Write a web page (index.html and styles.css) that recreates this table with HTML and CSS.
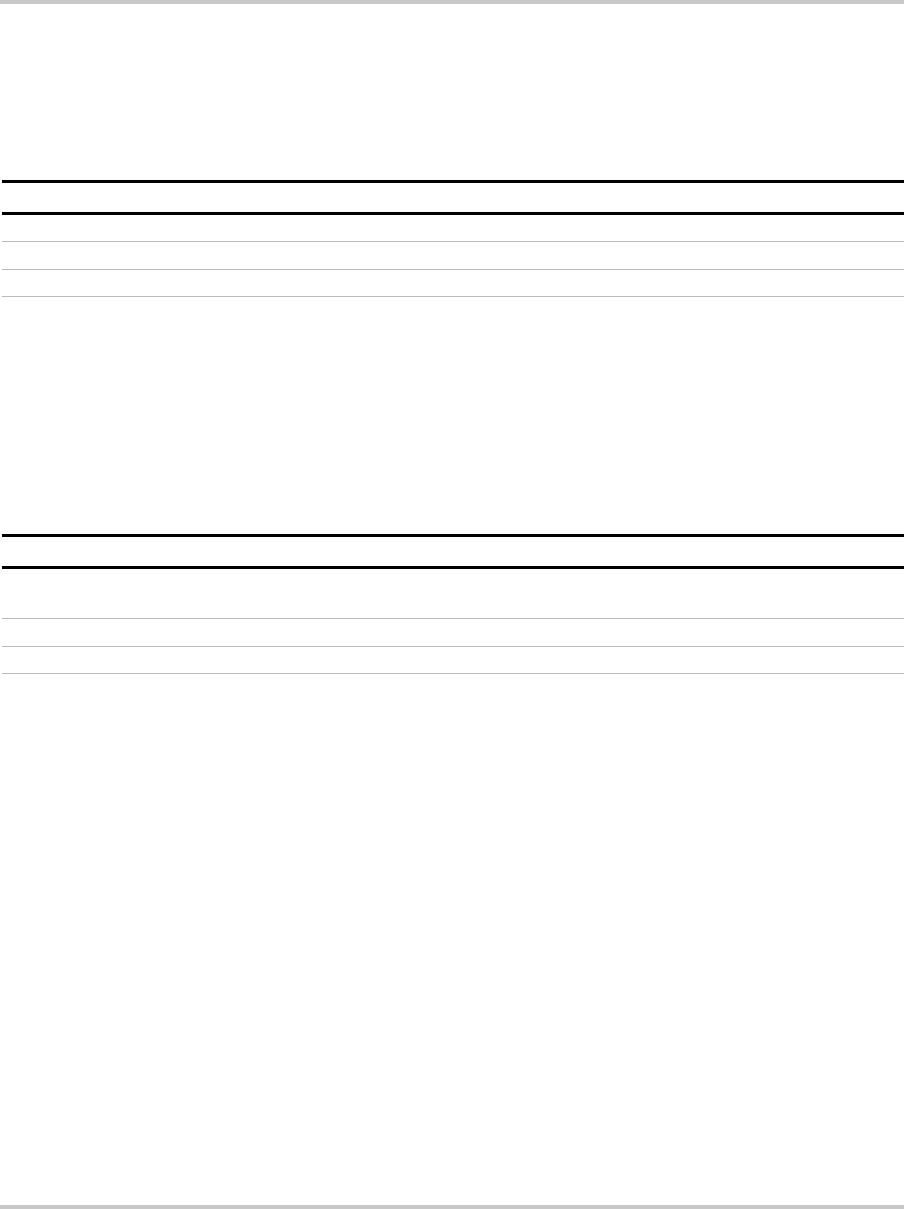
FILE: index.html
```html
<!DOCTYPE html>
<html lang="en">
<head>
  <meta charset="UTF-8" />
  <meta name="viewport" content="width=device-width, initial-scale=1.0" />
  <title>Report</title>
  <link rel="stylesheet" href="styles.css">
</head>
<body>
  <div class="page-rule"></div>
  <main class="page">
    <section class="section first">
      <table class="sheet">
        <thead>
          <tr><th></th></tr>
        </thead>
        <tbody>
          <tr class="row"><td></td></tr>
          <tr class="row"><td></td></tr>
          <tr class="row"><td></td></tr>
        </tbody>
      </table>
    </section>
    <section class="section second">
      <table class="sheet">
        <thead>
          <tr><th></th></tr>
        </thead>
        <tbody>
          <tr class="row tall"><td></td></tr>
          <tr class="row"><td></td></tr>
          <tr class="row"><td></td></tr>
        </tbody>
      </table>
    </section>
  </main>
  <div class="page-rule"></div>
</body>
</html>
```

FILE: styles.css
```css
* { box-sizing: border-box; }
html, body {
  height: 100%;
}
body {
  margin: 0;
  font-family: 'Liberation Sans', Arial, sans-serif;
  font-size: 13px;
  color: #222;
  background: #fff;
  display: flex;
  flex-direction: column;
}
.page-rule {
  height: 4px;
  background: #c8c8c8;
  flex: none;
}
.page {
  flex: 1;
  padding-left: 2px;
}
.section.first {
  margin-top: 176px;
}
.section.second {
  margin-top: 237px;
}
.sheet {
  width: 100%;
  border-collapse: collapse;
  border-top: 3px solid #000;
}
.sheet th {
  height: 32px;
  padding: 0;
  border-bottom: 3px solid #000;
}
.sheet td {
  padding: 0;
  border-bottom: 1px solid #bbb;
}
.row td {
  height: 28px;
}
.row:last-child td {
  height: 27px;
}
.row.tall td {
  height: 51px;
}
```
